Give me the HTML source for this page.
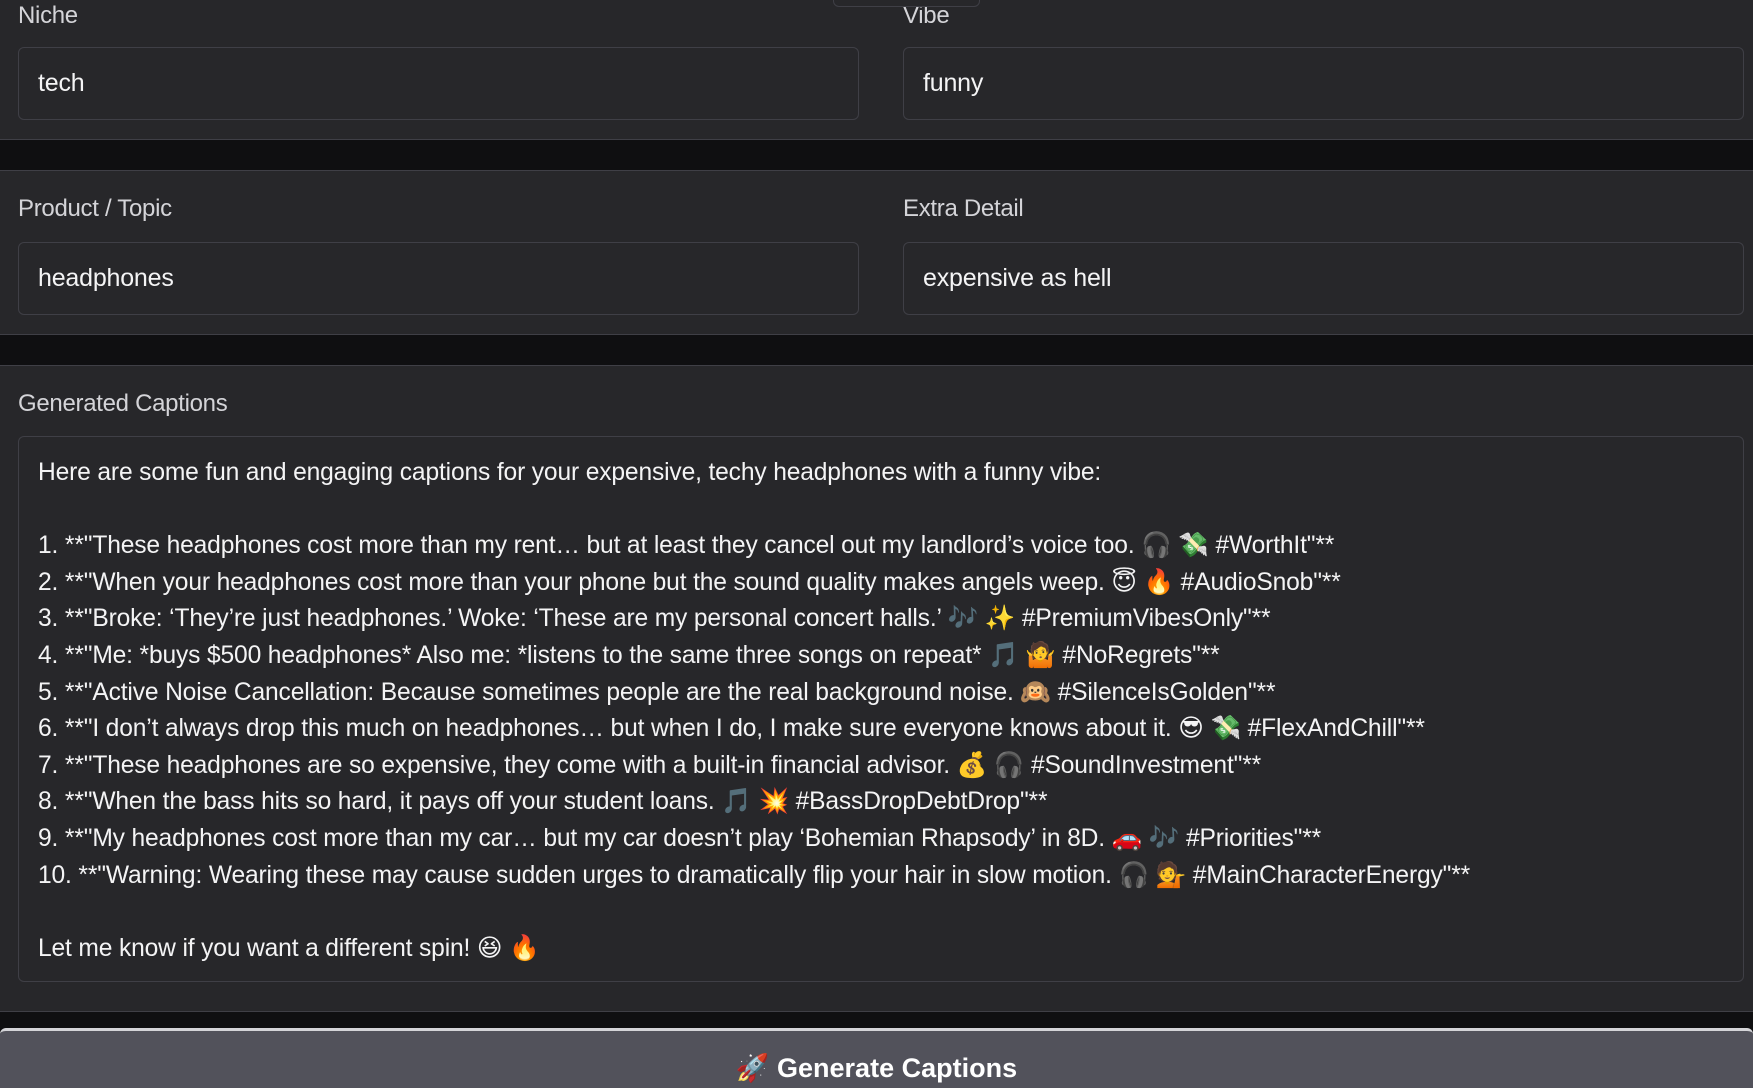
<!DOCTYPE html>
<html><head><meta charset="utf-8"><style>
*{box-sizing:border-box;margin:0;padding:0}
body{width:1753px;height:1079px;overflow:hidden;background:#0f0f11;font-family:"Liberation Sans","Noto Sans CJK SC","DejaVu Sans",sans-serif;color:#e4e4e7;position:relative}
.panel{position:absolute;left:0;width:1753px;background:#27272a;border-bottom:1px solid #3f3f46;border-top:1px solid #3f3f46}
.lbl{position:absolute;font-size:24px;color:#d4d4d8;letter-spacing:-0.3px}
.inp{position:absolute;border:1px solid #3f3f46;border-radius:6px;background:#27272a;font-size:25px;color:#f4f4f5;padding-left:19px;display:flex;align-items:center;letter-spacing:-0.2px}
.tab{position:absolute;left:833px;top:-2px;width:147px;height:9px;background:#27272a;border:1px solid #3f3f46;border-radius:0 0 6px 6px}
.ta{position:absolute;left:18px;top:70px;width:1726px;height:546px;border:1px solid #3f3f46;border-radius:6px;padding:18px 19px 16px;font-size:24.6px;line-height:36.6px;color:#f4f4f5;white-space:pre;letter-spacing:-0.15px}
.btn{position:absolute;left:0;top:1028px;width:1753px;height:60px;background:#52525b;border-top:3px solid #d4d4d8;border-radius:6px 6px 0 0;text-align:center;font-size:27px;font-weight:bold;color:#fff;padding-top:21px}
</style></head><body>
<div class="panel" style="top:-1px;height:141px">
<div class="lbl" style="left:18px;top:2px">Niche</div>
<div class="lbl" style="left:903px;top:2px">Vibe</div>
<div class="inp" style="left:18px;top:47px;width:841px;height:73px">tech</div>
<div class="inp" style="left:903px;top:47px;width:841px;height:73px">funny</div>
</div>
<div class="tab"></div>
<div class="panel" style="top:170px;height:165px">
<div class="lbl" style="left:18px;top:24px">Product / Topic</div>
<div class="lbl" style="left:903px;top:24px">Extra Detail</div>
<div class="inp" style="left:18px;top:71px;width:841px;height:73px">headphones</div>
<div class="inp" style="left:903px;top:71px;width:841px;height:73px">expensive as hell</div>
</div>
<div class="panel" style="top:365px;height:647px">
<div class="lbl" style="left:18px;top:24px">Generated Captions</div>
<div class="ta">Here are some fun and engaging captions for your expensive, techy headphones with a funny vibe:

1. **"These headphones cost more than my rent… but at least they cancel out my landlord’s voice too. 🎧 💸 #WorthIt"**
2. **"When your headphones cost more than your phone but the sound quality makes angels weep. 😇 🔥 #AudioSnob"**
3. **"Broke: ‘They’re just headphones.’ Woke: ‘These are my personal concert halls.’ 🎶 ✨ #PremiumVibesOnly"**
4. **"Me: *buys $500 headphones* Also me: *listens to the same three songs on repeat* 🎵 🤷 #NoRegrets"**
5. **"Active Noise Cancellation: Because sometimes people are the real background noise. 🙉 #SilenceIsGolden"**
6. **"I don’t always drop this much on headphones… but when I do, I make sure everyone knows about it. 😎 💸 #FlexAndChill"**
7. **"These headphones are so expensive, they come with a built-in financial advisor. 💰 🎧 #SoundInvestment"**
8. **"When the bass hits so hard, it pays off your student loans. 🎵 💥 #BassDropDebtDrop"**
9. **"My headphones cost more than my car… but my car doesn’t play ‘Bohemian Rhapsody’ in 8D. 🚗 🎶 #Priorities"**
10. **"Warning: Wearing these may cause sudden urges to dramatically flip your hair in slow motion. 🎧 💁 #MainCharacterEnergy"**

Let me know if you want a different spin! 😆 🔥</div>
</div>
<div class="btn">🚀 Generate Captions</div>
</body></html>
